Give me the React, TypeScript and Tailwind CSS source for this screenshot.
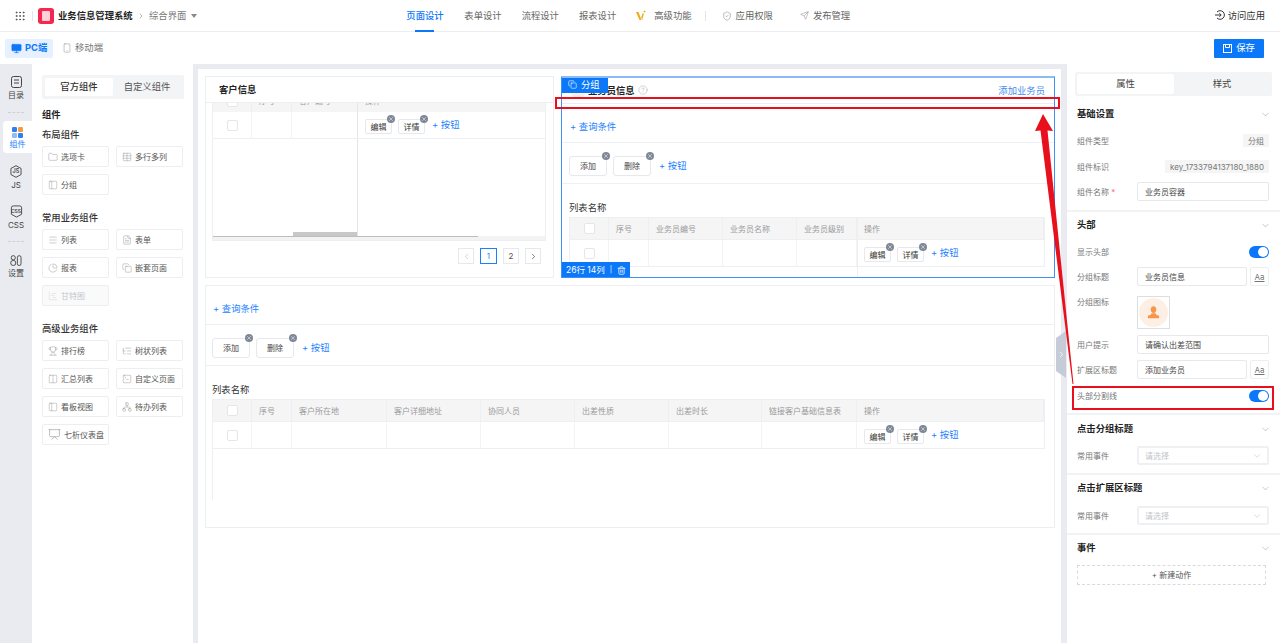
import type { ReactNode } from "react";
import {
  ChartGantt,
  ChartPie,
  ChevronDown,
  ChevronLeft,
  ChevronRight,
  CircleHelp,
  Columns2,
  Copy,
  FileText,
  Folder,
  Grip,
  ListTree,
  Menu,
  Monitor,
  Network,
  PanelLeft,
  Presentation,
  Send,
  ShieldCheck,
  Smartphone,
  SquareTerminal,
  Table,
  Trash2,
  Trophy,
  X,
} from "lucide-react";

const FONT = "font-['Inter','Noto_Sans_CJK_SC',sans-serif]";

function Remove() {
  return (
    <span className="absolute -right-[4px] -top-[5px] grid h-[8px] w-[8px] place-items-center rounded-full bg-[#7f8896] text-white">
      <X size={6} strokeWidth={2} />
    </span>
  );
}

function SmallBtn({ children }: { children: ReactNode }) {
  return (
    <span className="relative mt-[3px] grid h-[15px] w-[27px] place-items-center rounded-[2px] border border-[#e6e8ec] bg-white text-[8px] text-[#333]">
      {children}
      <Remove />
    </span>
  );
}

function BigBtn({ children }: { children: ReactNode }) {
  return (
    <span className="relative grid h-[20px] w-[38px] place-items-center rounded-[3px] border border-[#e6e8ec] bg-white text-[8px] text-[#444]">
      {children}
      <Remove />
    </span>
  );
}

function AddLink({ children, className = "" }: { children: ReactNode; className?: string }) {
  return <span className={`block text-[9.33px] leading-[14px] text-[#1b7fff] ${className}`}>+ {children}</span>;
}

function RowActions() {
  return (
    <div className="flex items-center gap-[6px]">
      <SmallBtn>编辑</SmallBtn>
      <SmallBtn>详情</SmallBtn>
      <AddLink className="ml-[1px]">按钮</AddLink>
    </div>
  );
}

function Checkbox() {
  return <span className="block h-[11px] w-[11px] rounded-[2px] border border-[#e4e6ea] bg-white" />;
}

function DataTable({ cols, heads, widthClass }: { cols: string; heads: string[]; widthClass: string }) {
  return (
    <div className={widthClass}>
      <div className={`grid h-[23px] border border-[#eeeff2] bg-[#f5f5f6] ${cols}`}>
        <span className="grid place-items-center border-r border-[#eeeff2]">
          <Checkbox />
        </span>
        {heads.map((h) => (
          <span key={h} className="flex items-center border-r border-[#eeeff2] pl-[7px] text-[8px] text-[#9a9a9a]">
            {h}
          </span>
        ))}
      </div>
      <div className={`grid h-[27px] border-x border-b border-[#eeeff2] bg-white ${cols}`}>
        <span className="grid place-items-center border-r border-[#f2f3f6]">
          <Checkbox />
        </span>
        {heads.map((h, i) =>
          i === heads.length - 1 ? (
            <span key={h} className="flex items-center pl-[7px]">
              <RowActions />
            </span>
          ) : (
            <span key={h} className="border-r border-[#f2f3f6]" />
          ),
        )}
      </div>
    </div>
  );
}

function QueryAndActions({ wide }: { wide?: boolean }) {
  return (
    <>
      <div className={`flex h-[39px] items-center border-b border-[#eef0f3] pt-[7px] ${wide ? "pl-[7px]" : "pl-[8px]"}`}>
        <AddLink>查询条件</AddLink>
      </div>
      <div className={`flex h-[41px] items-center gap-[6px] border-b border-[#eef0f3] pt-[6px] ${wide ? "pl-[6px]" : "pl-[7px]"}`}>
        <BigBtn>添加</BigBtn>
        <BigBtn>删除</BigBtn>
        <AddLink className="mb-[1px] ml-[2px]">按钮</AddLink>
      </div>
    </>
  );
}

function CustomerGroup() {
  return (
    <section className="relative h-[202px] w-[349px] shrink-0 overflow-hidden border border-[#eceef2] bg-white">
      <header className="flex h-[26px] items-center border-b border-[#eceef2] pl-[13px] text-[9.33px] font-bold text-[#222]">
        客户信息
      </header>
      <div className="mx-[6px] h-[138px] w-[334px] overflow-hidden border-x border-b border-[#eeeff2]">
        <div className="-mt-[13px] grid h-[22px] grid-cols-[39px_40px_65px_1fr] bg-[#f5f5f6] text-[8px] text-[#9a9a9a]">
          <span className="grid place-items-center border-r border-[#eeeff2]">
            <Checkbox />
          </span>
          <span className="flex items-center border-r border-[#eeeff2] pl-[7px]">序号</span>
          <span className="flex items-center pl-[7px]">客户编号</span>
          <span className="flex items-center border-l border-[#e4e5e8] pl-[7px]">操作</span>
        </div>
        <div className="grid h-[27px] grid-cols-[39px_40px_65px_1fr] border-b border-[#eeeff2]">
          <span className="grid place-items-center border-r border-[#f2f3f6]">
            <Checkbox />
          </span>
          <span className="border-r border-[#f2f3f6]" />
          <span />
          <span className="flex items-center border-l border-[#e4e5e8] pl-[7px]">
            <RowActions />
          </span>
        </div>
        <div className="flex h-[97px] items-end">
          <span className="ml-[80px] h-[4px] w-[64px] bg-[#c8c8c8]" />
          <span className="h-full border-l border-[#e4e5e8]" />
        </div>
        <div className="h-[5px] bg-[#f3f3f4]">
          <div className="h-[1px] w-[265px] bg-[#bdbdbd]" />
        </div>
      </div>
      <div className="mt-[7px] flex justify-end gap-[6px] pr-[12px]">
        <span className="grid h-[16px] w-[16px] place-items-center border border-[#e6e8ec] text-[#c4c4c4]">
          <ChevronLeft size={9} />
        </span>
        <span className="grid h-[16px] w-[17px] place-items-center border border-[#1b7fff] text-[8px] text-[#1b7fff]">1</span>
        <span className="grid h-[16px] w-[16px] place-items-center border border-[#e6e8ec] text-[8px] text-[#555]">2</span>
        <span className="grid h-[16px] w-[16px] place-items-center border border-[#e6e8ec] text-[#555]">
          <ChevronRight size={9} />
        </span>
      </div>
    </section>
  );
}

function SalesGroup() {
  return (
    <section className="relative h-[202px] w-[494px] shrink-0 overflow-hidden border border-[#3f90f5] border-t-2 border-t-[#8cbcf5] bg-white">
      <header className="flex h-[26px] items-center justify-between border-b border-[#eceef2] pl-[26px] pr-[9px]">
        <span className="flex items-center gap-[3px] text-[9.33px] font-bold text-[#222]">
          业务员信息
          <CircleHelp size={10} strokeWidth={1} className="text-[#999]" />
        </span>
        <span className="text-[9.33px] text-[#3f8cf0]">添加业务员</span>
      </header>
      <QueryAndActions />
      <div className="flex h-[33px] items-end pb-[2px] pl-[7px] text-[9.33px] text-[#333]">列表名称</div>
      <DataTable
        widthClass="ml-[7px] w-[476px]"
        cols="grid-cols-[39px_40px_74px_74px_60px_1fr]"
        heads={["序号", "业务员编号", "业务员名称", "业务员级别", "操作"]}
      />
      <span className="absolute bottom-0 left-[295px] top-[139px] border-l border-[#eceef0]" />
      <span className="absolute left-[8px] top-[4px] h-[16px] w-[16px] rounded-full bg-[#feefe4]" />
      <div className="absolute -left-px -top-[2px] flex h-[17px] w-[47px] items-center gap-[4px] bg-[#0b78fa] pl-[7px] text-[9.33px] text-white">
        <Copy size={9} strokeWidth={1.6} />
        分组
      </div>
      <div className="absolute -left-px bottom-[-1px] flex h-[16px] w-[69px] items-center gap-[5px] bg-[#0b78fa] pl-[5px] text-[8.5px] text-white">
        26行 14列
        <span className="text-[7px]">|</span>
        <Trash2 size={9} />
      </div>
    </section>
  );
}

function CompBtn({ icon, label, disabled }: { icon: ReactNode; label: string; disabled?: boolean }) {
  return (
    <span
      className={`flex h-[21px] w-[67px] items-center gap-[3px] rounded-[2px] border border-[#eceef1] pl-[5px] text-[8px] ${disabled ? "bg-[#fafafb] text-[#c4c7cc]" : "bg-white text-[#555]"}`}
    >
      <span className={`shrink-0 ${disabled ? "text-[#ccc]" : "text-[#888]"}`}>{icon}</span>
      {label}
    </span>
  );
}

const ic = { size: 10, strokeWidth: 1 };

function CompGrid({ children }: { children: ReactNode }) {
  return <div className="grid grid-cols-[67px_67px] gap-x-[7px] gap-y-[7px]">{children}</div>;
}

function Palette() {
  return (
    <aside className="w-[161px] shrink-0 bg-white px-[10px] pt-[11px]">
      <div className="flex h-[24px] w-[142px] items-center rounded-[2px] bg-[#f3f4f6] p-[3px] text-[9.33px]">
        <span className="grid h-[18px] w-[68px] place-items-center rounded-[2px] bg-white font-medium text-[#333]">官方组件</span>
        <span className="grid flex-1 place-items-center text-[#555]">自定义组件</span>
      </div>
      <div className="mt-[9px] text-[9.33px] font-bold leading-[14px] text-[#222]">组件</div>
      <div className="mb-[4px] mt-[6px] text-[9.33px] font-medium leading-[14px] text-[#333]">布局组件</div>
      <CompGrid>
        <CompBtn icon={<Folder {...ic} />} label="选项卡" />
        <CompBtn icon={<Table {...ic} />} label="多行多列" />
        <CompBtn icon={<PanelLeft {...ic} />} label="分组" />
      </CompGrid>
      <div className="mb-[4px] mt-[16px] text-[9.33px] font-medium leading-[14px] text-[#333]">常用业务组件</div>
      <CompGrid>
        <CompBtn icon={<Menu {...ic} />} label="列表" />
        <CompBtn icon={<FileText {...ic} />} label="表单" />
        <CompBtn icon={<ChartPie {...ic} />} label="报表" />
        <CompBtn icon={<Copy {...ic} />} label="嵌套页面" />
        <CompBtn icon={<ChartGantt {...ic} />} label="甘特图" disabled />
      </CompGrid>
      <div className="mb-[4px] mt-[16px] text-[9.33px] font-medium leading-[14px] text-[#333]">高级业务组件</div>
      <CompGrid>
        <CompBtn icon={<Trophy {...ic} />} label="排行榜" />
        <CompBtn icon={<ListTree {...ic} />} label="树状列表" />
        <CompBtn icon={<Columns2 {...ic} />} label="汇总列表" />
        <CompBtn icon={<SquareTerminal {...ic} />} label="自定义页面" />
        <CompBtn icon={<PanelLeft {...ic} />} label="看板视图" />
        <CompBtn icon={<Network {...ic} />} label="待办列表" />
        <CompBtn icon={<Presentation size={13} strokeWidth={1} />} label="七析仪表盘" />
      </CompGrid>
    </aside>
  );
}

function RailItem({ icon, label, active }: { icon: ReactNode; label: string; active?: boolean }) {
  return (
    <div
      className={`flex flex-col items-center ${active ? "ml-[3px] w-[29px] gap-[1px] rounded-l-[4px] bg-white pb-[3px] pt-[6px] text-[#1b7fff]" : "w-[32px] gap-[2px] text-[#444]"}`}
    >
      {icon}
      <span className="text-[8px] leading-[11px]">{label}</span>
    </div>
  );
}

function Rail() {
  return (
    <nav className="flex w-[32px] shrink-0 flex-col pt-[12px]">
      <RailItem
        label="目录"
        icon={
          <svg width="11" height="12" viewBox="0 0 11 12" fill="none" stroke="#444" strokeWidth="1">
            <rect x="0.5" y="0.5" width="10" height="11" rx="2" />
            <path d="M3 4h5M3 7h5" />
          </svg>
        }
      />
      <div className="mx-auto mb-[8px] mt-[11px] w-[16px] border-t border-dashed border-[#cfd2d8]" />
      <RailItem
        active
        label="组件"
        icon={
          <svg width="11" height="11" viewBox="0 0 11 11">
            <rect x="0" y="0" width="5" height="5" rx="1.2" fill="#2f80ed" />
            <rect x="6" y="0" width="5" height="5" rx="1.2" fill="#f59a3c" />
            <rect x="0" y="6" width="5" height="5" rx="1.2" fill="#8fbdf5" />
            <rect x="6" y="6" width="5" height="5" rx="1.2" fill="#2f80ed" />
          </svg>
        }
      />
      <div className="mt-[12px]">
        <RailItem
          label="JS"
          icon={
            <span className="relative grid h-[13px] w-[12px] place-items-center">
              <svg width="12" height="13" viewBox="0 0 13 14" fill="none" stroke="#444" className="absolute inset-0">
                <path d="M6.5.7l5.5 3v6.6l-5.500 3-5.500-3V3.700z" />
              </svg>
              <span className="relative text-[5.500px] font-semibold text-[#444]">JS</span>
            </span>
          }
        />
      </div>
      <div className="mt-[14px]">
        <RailItem
          label="CSS"
          icon={
            <span className="relative grid h-[13px] w-[13px] place-items-center">
              <svg width="13" height="13" viewBox="0 0 13 14" fill="none" stroke="#444" className="absolute inset-0">
                <path d="M1 3a2 2 0 0 1 2-2h7a2 2 0 0 1 2 2v7l-5.500 3L1 10z" />
              </svg>
              <span className="relative text-[5px] font-semibold text-[#444]">CSS</span>
            </span>
          }
        />
      </div>
      <div className="mx-auto mb-[13px] mt-[10px] w-[16px] border-t border-dashed border-[#cfd2d8]" />
      <RailItem
        label="设置"
        icon={
          <svg width="12" height="11" viewBox="0 0 12 12" fill="none" stroke="#444" strokeWidth="1">
            <circle cx="3" cy="3" r="2.300" />
            <circle cx="3" cy="8.700" r="2.800" />
            <rect x="7.500" y="0.700" width="4" height="10.800" rx="2" />
          </svg>
        }
      />
    </nav>
  );
}

function SectionTitle({ children }: { children: ReactNode }) {
  return (
    <div className="flex h-[14px] items-center justify-between pr-[9px] text-[9.33px] font-bold text-[#222]">
      {children}
      <ChevronDown size={11} strokeWidth={1} className="text-[#888]" />
    </div>
  );
}

function Field({ label, children, required }: { label: string; children: ReactNode; required?: boolean }) {
  return (
    <div className="flex min-h-[19px] items-center justify-between pr-[11px]">
      <span className="text-[8px] text-[#777]">
        {label}
        {required && <span className="text-[#f56c6c]"> *</span>}
      </span>
      {children}
    </div>
  );
}

function TextBox({ value, width = "w-[132px]" }: { value: string; width?: string }) {
  return (
    <span className={`flex h-[19px] items-center rounded-[2px] border border-[#e6e8ec] pl-[7px] text-[8px] text-[#444] ${width}`}>
      {value}
    </span>
  );
}

function AaBox() {
  return (
    <span className="ml-[3px] grid h-[19px] w-[19px] place-items-center rounded-[2px] border border-[#eceef1] text-[8px] text-[#777] underline">
      Aa
    </span>
  );
}

function Toggle() {
  return (
    <span className="flex h-[12px] w-[20px] items-center justify-end rounded-full bg-[#0b78fa] pr-[1px]">
      <span className="h-[10px] w-[10px] rounded-full bg-white" />
    </span>
  );
}

function SelectBox() {
  return (
    <span className="flex h-[19px] w-[132px] items-center justify-between rounded-[2px] border-2 border-[#eef0f3] pl-[6px] pr-[5px] text-[8px] text-[#c2c5ca]">
      请选择
      <ChevronDown size={10} strokeWidth={1} className="text-[#aaa]" />
    </span>
  );
}

function Inspector() {
  return (
    <aside className="w-[213px] shrink-0 bg-white pl-[10px]">
      <div className="-ml-[2px] mt-[8px] flex h-[24px] w-[197px] items-center rounded-[2px] bg-[#f3f4f6] px-[2px] text-[9.33px] text-[#444]">
        <span className="grid h-[20px] w-[97px] place-items-center rounded-[2px] bg-white">属性</span>
        <span className="grid flex-1 place-items-center">样式</span>
      </div>
      <div className="-ml-[10px] mt-[11px] border-b-2 border-[#f2f3f5] pb-[9px] pl-[10px]">
        <SectionTitle>基础设置</SectionTitle>
        <div className="mt-[10px] flex h-[19px] items-center justify-between pr-[11px] text-[8px] text-[#777]">
          <span>组件类型</span>
          <span className="flex h-[13px] items-center rounded-[1px] bg-[#f5f5f6] px-[5px] text-[#777]">分组</span>
        </div>
        <div className="mt-[7px] flex h-[19px] items-center justify-between pr-[11px] text-[8px] text-[#777]">
          <span>组件标识</span>
          <span className="flex h-[13px] items-center rounded-[1px] bg-[#f5f5f6] px-[5px] text-[#777]">key_1733794137180_1880</span>
        </div>
        <div className="mt-[6px]">
          <Field label="组件名称" required>
            <TextBox value="业务员容器" />
          </Field>
        </div>
      </div>
      <div className="-ml-[10px] border-b-2 border-[#f2f3f5] pb-[8px] pl-[10px] pt-[6px]">
        <SectionTitle>头部</SectionTitle>
        <div className="mt-[10px]">
          <Field label="显示头部">
            <Toggle />
          </Field>
        </div>
        <div className="mt-[6px]">
          <Field label="分组标题">
            <span className="flex">
              <TextBox value="业务员信息" width="w-[110px]" />
              <AaBox />
            </span>
          </Field>
        </div>
        <div className="mt-[10px] flex items-start justify-between pr-[11px]">
          <span className="text-[8px] text-[#777]">分组图标</span>
          <span className="mr-[99px] grid h-[33px] w-[33px] place-items-center border border-[#dcdee2]">
            <span className="grid h-[29px] w-[29px] place-items-center rounded-full bg-[#feefe4]">
              <svg width="13" height="13" viewBox="0 0 13 13" fill="#f8954a">
                <ellipse cx="6.500" cy="3.600" rx="2.700" ry="3.400" />
                <path d="M4.500 7.200h4l.6 1.500 3 1v2.600H.9V9.700l3-1z" />
              </svg>
            </span>
          </span>
        </div>
        <div className="mt-[6px]">
          <Field label="用户提示">
            <TextBox value="请确认出差范围" />
          </Field>
        </div>
        <div className="mt-[6px]">
          <Field label="扩展区标题">
            <span className="flex">
              <TextBox value="添加业务员" width="w-[110px]" />
              <AaBox />
            </span>
          </Field>
        </div>
        <div className="mt-[7px]">
          <Field label="头部分割线">
            <Toggle />
          </Field>
        </div>
      </div>
      <div className="-ml-[10px] border-b-2 border-[#f2f3f5] pb-[8px] pl-[10px] pt-[7px]">
        <SectionTitle>点击分组标题</SectionTitle>
        <div className="mt-[10px]">
          <Field label="常用事件">
            <SelectBox />
          </Field>
        </div>
      </div>
      <div className="-ml-[10px] border-b-2 border-[#f2f3f5] pb-[8px] pl-[10px] pt-[6px]">
        <SectionTitle>点击扩展区标题</SectionTitle>
        <div className="mt-[11px]">
          <Field label="常用事件">
            <SelectBox />
          </Field>
        </div>
      </div>
      <div className="pt-[6px]">
        <SectionTitle>事件</SectionTitle>
        <div className="mt-[10px] grid h-[20px] w-[189px] place-items-center border border-dashed border-[#d8dade] text-[8px] text-[#555]">
          + 新建动作
        </div>
      </div>
    </aside>
  );
}

function Annotations() {
  return (
    <>
      <div className="absolute left-[555px] top-[97px] h-[12px] w-[505px] border-2 border-[#e8101c]" />
      <div className="absolute left-[1072px] top-[386px] h-[24px] w-[202px] border-2 border-[#e8101c]" />
      <svg className="absolute left-[1030px] top-[110px]" width="50" height="280" viewBox="0 0 50 280">
        <path d="M13 4L23 21 17.500 20.500 43.500 274 42.500 274 10.500 20.500 5 21z" fill="#e8101c" />
      </svg>
    </>
  );
}

export default function App() {
  return (
    <div className={`relative flex h-screen w-[1280px] flex-col overflow-hidden bg-[#e9ebf0] ${FONT}`}>
      <header className="flex h-[32px] shrink-0 items-center border-b border-[#eceef1] bg-white">
        <Grip size={12} strokeWidth={1.6} className="ml-[14px] text-[#444]" />
        <span className="ml-[6px] h-[10px] border-l border-[#e3e5e8]" />
        <span className="ml-[5px] grid h-[16px] w-[16px] place-items-center rounded-[3px] bg-[#f5274e]">
          <span className="h-[10px] w-[8px] rounded-[1px] bg-[#fbd0d8]" />
        </span>
        <span className="ml-[4px] w-[75px] whitespace-nowrap text-[9.33px] font-bold text-[#222]">业务信息管理系统</span>
        <ChevronRight size={8} className="ml-[4px] text-[#999]" />
        <span className="ml-[4px] text-[9.33px] text-[#777]">综合界面</span>
        <span className="ml-[5px] h-0 w-0 border-x-[3px] border-t-[4px] border-x-transparent border-t-[#888]" />
        <nav className="ml-[209px] flex h-full items-center text-[9.33px] text-[#666]">
          <span className="relative flex h-full w-[38px] items-center font-medium text-[#0b78fa]">
            页面设计
            <span className="absolute bottom-[-1px] left-[9px] h-[2px] w-[19px] bg-[#0b78fa]" />
          </span>
          <span className="ml-[20px]">表单设计</span>
          <span className="ml-[20px]">流程设计</span>
          <span className="ml-[20px]">报表设计</span>
          <svg className="ml-[20px]" width="10" height="11" viewBox="0 0 10 11" fill="#f0ab1e">
            <path d="M0 2h2.500L5.500 10H3.500zM5.200 7.500L6.500 3.500h1.500L6.200 10z" />
            <path d="M8.500 0l.4 1.100 1.100.4-1.100.4-.4 1.100-.4-1.100-1.100-.4 1.100-.4z" />
          </svg>
          <span className="ml-[8px]">高级功能</span>
          <span className="ml-[13px] h-[10px] border-l border-[#e3e5e8]" />
          <ShieldCheck size={10} strokeWidth={1} className="ml-[16px]" />
          <span className="ml-[4px]">应用权限</span>
          <Send size={9} strokeWidth={1} className="ml-[27px]" />
          <span className="ml-[4px]">发布管理</span>
        </nav>
        <span className="ml-auto mr-[15px] flex items-center gap-[3px] text-[9.33px] text-[#333]">
          <svg width="10" height="10" viewBox="0 0 10 10" fill="none" stroke="#333" strokeWidth="1">
            <path d="M2 2A4.300 4.300 0 1 1 2 8M0 5h6M4.300 3.200L6.200 5 4.300 6.800" />
          </svg>
          访问应用
        </span>
      </header>
      <div className="flex h-[32px] shrink-0 items-center bg-white pl-[5px] pr-[16px]">
        <span className="flex h-[19px] w-[48px] items-center gap-[3px] rounded-[2px] bg-[#e6f0ff] pl-[6px] text-[9.33px] font-bold text-[#0b78fa]">
          <Monitor size={11} strokeWidth={1.5} fill="currentColor" stroke="currentColor" />
          PC端
        </span>
        <span className="ml-[9px] flex items-center gap-[3px] text-[9.33px] text-[#777]">
          <Smartphone size={10} strokeWidth={1} />
          移动端
        </span>
        <span className="ml-auto flex h-[19px] w-[50px] items-center justify-center gap-[4px] rounded-[1px] bg-[#0b78fa] text-[9.33px] text-white">
          <svg width="9" height="9" viewBox="0 0 9 9" fill="none" stroke="#fff" strokeWidth="1">
            <rect x="0.5" y="0.5" width="8" height="8" />
            <path d="M2.500 1v2.500h4V1" />
          </svg>
          保存
        </span>
      </div>
      <div className="flex min-h-0 flex-1">
        <Rail />
        <Palette />
        <main className="ml-[5px] mr-[6px] mt-[5px] min-w-0 flex-1 bg-white pl-[7px] pt-[7px]">
          <div className="flex gap-[7px]">
            <CustomerGroup />
            <SalesGroup />
          </div>
          <section className="mt-[7px] h-[243px] w-[850px] border border-[#eceef2] bg-white">
            <QueryAndActions wide />
            <div className="flex h-[33px] items-end pb-[2px] pl-[6px] text-[9.33px] text-[#333]">列表名称</div>
            <DataTable
              widthClass="ml-[6px] w-[833px]"
              cols="grid-cols-[39px_40px_95px_94px_94px_94px_93px_95px_1fr]"
              heads={["序号", "客户所在地", "客户详细地址", "协同人员", "出差性质", "出差时长", "链接客户基础信息表", "操作"]}
            />
            <div className="ml-[6px] h-[51px] border-l border-[#eeeff2]" />
          </section>
        </main>
        <Inspector />
      </div>
      <div className="absolute left-[1056px] top-[331px] grid h-[47px] w-[10px] place-items-center bg-[#c5ccd7] [clip-path:polygon(100%_0,100%_100%,0_85%,0_15%)]">
        <ChevronRight size={9} className="text-white" />
      </div>
      <Annotations />
    </div>
  );
}
